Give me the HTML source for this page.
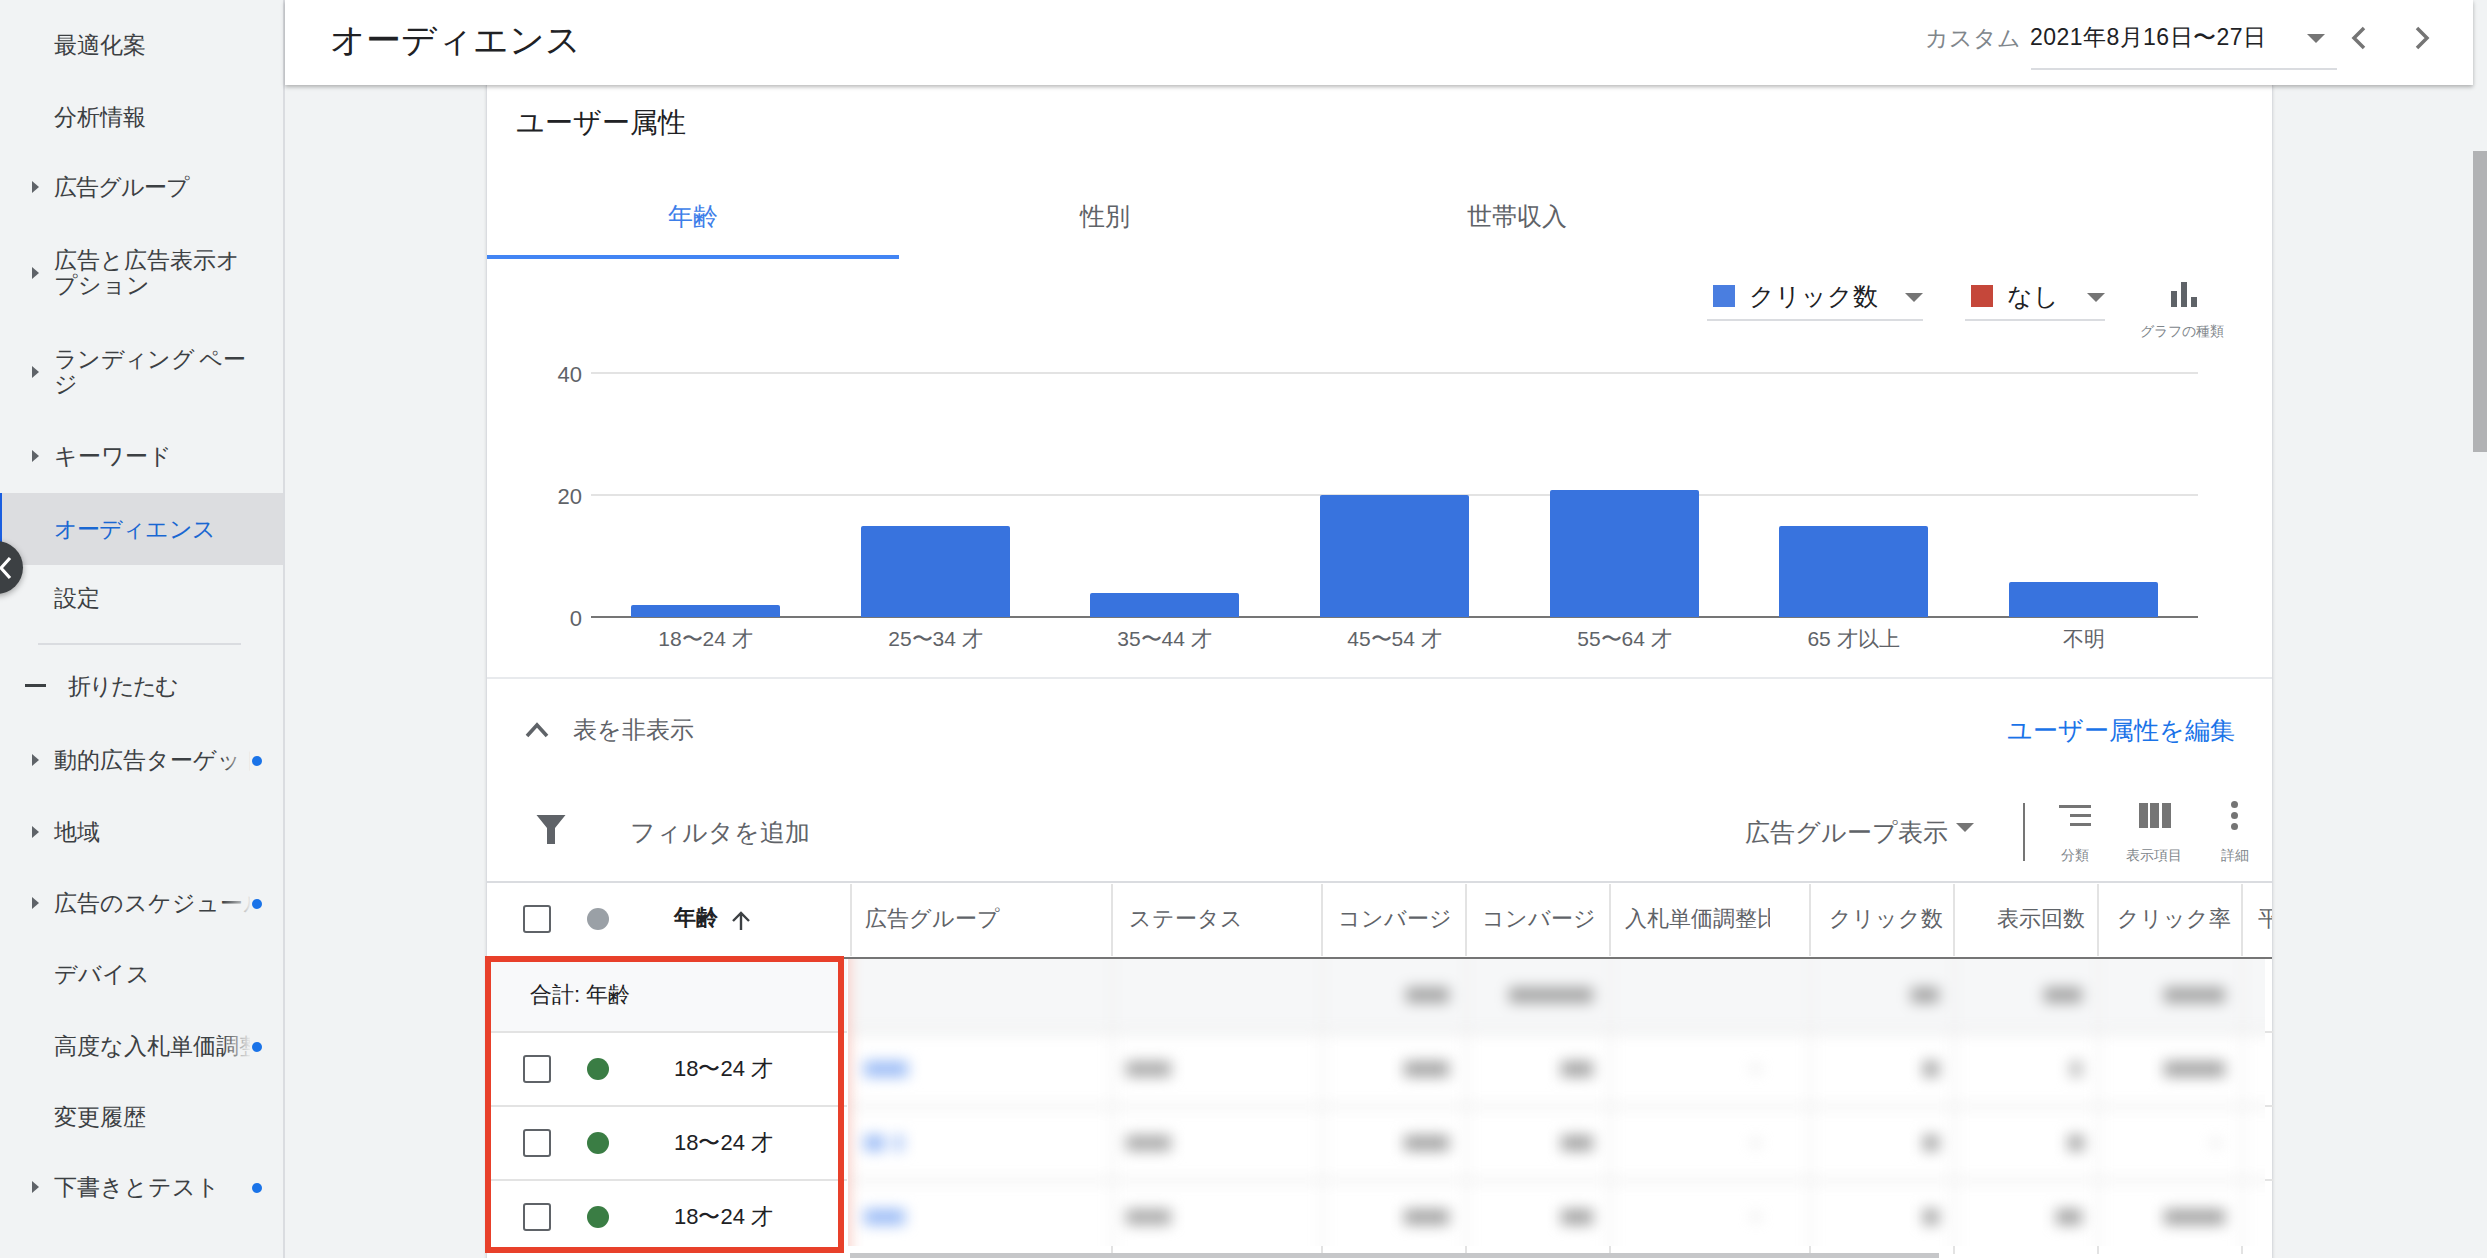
<!DOCTYPE html>
<html><head><meta charset="utf-8"><style>
*{margin:0;padding:0;box-sizing:border-box}
html,body{width:2487px;height:1258px;overflow:hidden;background:#f1f3f4;font-family:"Liberation Sans",sans-serif;color:#3c4043}
.a{position:absolute}
.t{position:absolute;white-space:nowrap}
#side{position:absolute;left:0;top:0;width:285px;height:1258px;background:#f1f3f4;border-right:2px solid #dadce0;overflow:hidden}
.nav{position:absolute;left:54px;font-size:23px;line-height:27px;color:#3c4043;white-space:nowrap}
.tri{position:absolute;left:32px;width:0;height:0;border-top:6px solid transparent;border-bottom:6px solid transparent;border-left:7px solid #5f6368}
.dot{position:absolute;left:252px;width:10px;height:10px;border-radius:50%;background:#1a73e8}
.fade{position:absolute;left:222px;width:30px;height:30px;background:linear-gradient(90deg,rgba(241,243,244,0),#f1f3f4)}
#hdr{position:absolute;left:285px;top:0;width:2188px;height:85px;background:#fff;box-shadow:0 2px 4px rgba(0,0,0,.28);z-index:5}
#card{position:absolute;left:486px;top:85px;width:1787px;height:1200px;background:#fff;border-left:1px solid #dadce0;border-right:1px solid #dadce0;box-shadow:0 0 3px rgba(0,0,0,.12)}
#vscroll{position:absolute;left:2473px;top:151px;width:14px;height:301px;background:#b1b2b4}
</style></head><body>
<div id="side"><div class="a" style="left:0;top:493px;width:284px;height:72px;background:#dcdde0"></div>
<div class="a" style="left:0;top:493px;width:2px;height:72px;background:#1a5ee0"></div>
<div class="nav" style="top:32px;line-height:27px;letter-spacing:0px;color:#3c4043;">最適化案</div>
<div class="nav" style="top:104px;line-height:27px;letter-spacing:0px;color:#3c4043;">分析情報</div>
<div class="nav" style="top:174px;line-height:27px;letter-spacing:-1px;color:#3c4043;">広告グループ</div>
<div class="tri" style="top:181px"></div>
<div class="nav" style="top:248px;line-height:25px;letter-spacing:0px;color:#3c4043;">広告と広告表示オ<br>プション</div>
<div class="tri" style="top:267px"></div>
<div class="nav" style="top:347px;line-height:25px;letter-spacing:-0.7px;color:#3c4043;">ランディング ペー<br>ジ</div>
<div class="tri" style="top:366px"></div>
<div class="nav" style="top:443px;line-height:27px;letter-spacing:0px;color:#3c4043;">キーワード</div>
<div class="tri" style="top:450px"></div>
<div class="nav" style="top:516px;line-height:27px;letter-spacing:-0.9px;color:#1967d2;">オーディエンス</div>
<div class="nav" style="top:585px;line-height:27px;letter-spacing:0px;color:#3c4043;">設定</div>
<div class="nav" style="top:747px;line-height:27px;letter-spacing:0px;color:#3c4043;width:196px;overflow:hidden;">動的広告ターゲット</div>
<div class="fade" style="top:747px"></div>
<div class="tri" style="top:754px"></div>
<div class="dot" style="top:756px"></div>
<div class="nav" style="top:819px;line-height:27px;letter-spacing:0px;color:#3c4043;">地域</div>
<div class="tri" style="top:826px"></div>
<div class="nav" style="top:890px;line-height:27px;letter-spacing:0px;color:#3c4043;width:196px;overflow:hidden;">広告のスケジュール</div>
<div class="fade" style="top:890px"></div>
<div class="tri" style="top:897px"></div>
<div class="dot" style="top:899px"></div>
<div class="nav" style="top:961px;line-height:27px;letter-spacing:0px;color:#3c4043;">デバイス</div>
<div class="nav" style="top:1033px;line-height:27px;letter-spacing:0px;color:#3c4043;width:196px;overflow:hidden;">高度な入札単価調整</div>
<div class="fade" style="top:1033px"></div>
<div class="dot" style="top:1042px"></div>
<div class="nav" style="top:1104px;line-height:27px;letter-spacing:0px;color:#3c4043;">変更履歴</div>
<div class="nav" style="top:1174px;line-height:27px;letter-spacing:0px;color:#3c4043;">下書きとテスト</div>
<div class="tri" style="top:1181px"></div>
<div class="dot" style="top:1183px"></div>
<div class="a" style="left:38px;top:643px;width:203px;height:2px;background:#dadce0"></div>
<div class="a" style="left:25px;top:684px;width:21px;height:3px;background:#3c4043"></div>
<div class="nav" style="left:68px;top:673px;letter-spacing:-2px">折りたたむ</div></div>
<div class="a" style="left:-30px;top:541px;width:53px;height:53px;border-radius:50%;background:#3c4043;box-shadow:0 2px 6px rgba(0,0,0,.35);z-index:6"></div>
<svg class="a" style="left:0;top:555px;z-index:7" width="14" height="26" viewBox="0 0 14 26"><path d="M10 3 L1 13 L10 23" stroke="#fff" stroke-width="3.2" fill="none"/></svg>
<div id="hdr"><div class="t" style="left:45px;top:17px;font-size:35px;line-height:45px;color:#202124">オーディエンス</div>
<div class="t" style="left:1640px;top:22px;font-size:23px;line-height:32px;color:#80868b">カスタム</div>
<div class="t" style="left:1745px;top:21px;font-size:23px;line-height:32px;letter-spacing:0.45px;color:#202124">2021年8月16日〜27日</div>
<div class="a" style="left:1746px;top:68px;width:306px;height:2px;background:#dadce0"></div>
<div class="a" style="left:2022px;top:34px;width:0;height:0;border-left:9px solid transparent;border-right:9px solid transparent;border-top:9px solid #757575"></div>
<svg class="a" style="left:2064px;top:25px" width="20" height="26" viewBox="0 0 20 26"><path d="M15 3 L5 13 L15 23" stroke="#757575" stroke-width="3.5" fill="none"/></svg>
<svg class="a" style="left:2128px;top:25px" width="20" height="26" viewBox="0 0 20 26"><path d="M4 3 L14 13 L4 23" stroke="#757575" stroke-width="3.5" fill="none"/></svg></div>
<div id="card"><div class="t" style="left:29px;top:20px;font-size:28px;line-height:36px;color:#202124">ユーザー属性</div>
<div class="t" style="left:181px;top:114px;font-size:25px;line-height:34px;color:#3d7ee9">年齢</div>
<div class="t" style="left:593px;top:114px;font-size:25px;line-height:34px;color:#5f6368">性別</div>
<div class="t" style="left:980px;top:114px;font-size:25px;line-height:34px;color:#5f6368">世帯収入</div>
<div class="a" style="left:0;top:170px;width:412px;height:4px;background:#4285f4"></div>
<div class="a" style="left:1226px;top:200px;width:22px;height:22px;background:#4a7ee0"></div>
<div class="t" style="left:1262px;top:194px;font-size:25px;line-height:34px;color:#202124">クリック数</div>
<div class="a" style="left:1418px;top:208px;width:0;height:0;border-left:9px solid transparent;border-right:9px solid transparent;border-top:9px solid #757575"></div>
<div class="a" style="left:1220px;top:234px;width:216px;height:2px;background:#dadce0"></div>
<div class="a" style="left:1484px;top:200px;width:22px;height:22px;background:#c5473a"></div>
<div class="t" style="left:1520px;top:194px;font-size:25px;line-height:34px;color:#202124">なし</div>
<div class="a" style="left:1600px;top:208px;width:0;height:0;border-left:9px solid transparent;border-right:9px solid transparent;border-top:9px solid #757575"></div>
<div class="a" style="left:1478px;top:234px;width:140px;height:2px;background:#dadce0"></div>
<div class="a" style="left:1684px;top:206px;width:6px;height:16px;background:#5f6368"></div>
<div class="a" style="left:1694px;top:197px;width:6px;height:25px;background:#5f6368"></div>
<div class="a" style="left:1704px;top:212px;width:6px;height:10px;background:#5f6368"></div>
<div class="t" style="left:1653px;top:236px;font-size:14px;line-height:20px;color:#80868b">グラフの種類</div>
<div class="a" style="left:104px;top:287px;width:1607px;height:2px;background:#e3e3e3"></div>
<div class="t" style="left:53px;top:277px;width:42px;text-align:right;font-size:22px;line-height:26px;color:#5f6368">40</div>
<div class="a" style="left:104px;top:409px;width:1607px;height:2px;background:#e3e3e3"></div>
<div class="t" style="left:53px;top:399px;width:42px;text-align:right;font-size:22px;line-height:26px;color:#5f6368">20</div>
<div class="a" style="left:104px;top:531px;width:1607px;height:2px;background:#757575"></div>
<div class="t" style="left:53px;top:521px;width:42px;text-align:right;font-size:22px;line-height:26px;color:#5f6368">0</div>
<div class="a" style="left:144px;top:520px;width:149px;height:12px;background:#3873de;border-radius:2px 2px 0 0"></div>
<div class="t" style="left:94px;top:539px;width:249px;text-align:center;font-size:21px;line-height:30px;color:#5f6368">18〜24 才</div>
<div class="a" style="left:374px;top:441px;width:149px;height:91px;background:#3873de;border-radius:2px 2px 0 0"></div>
<div class="t" style="left:324px;top:539px;width:249px;text-align:center;font-size:21px;line-height:30px;color:#5f6368">25〜34 才</div>
<div class="a" style="left:603px;top:508px;width:149px;height:24px;background:#3873de;border-radius:2px 2px 0 0"></div>
<div class="t" style="left:553px;top:539px;width:249px;text-align:center;font-size:21px;line-height:30px;color:#5f6368">35〜44 才</div>
<div class="a" style="left:833px;top:410px;width:149px;height:122px;background:#3873de;border-radius:2px 2px 0 0"></div>
<div class="t" style="left:783px;top:539px;width:249px;text-align:center;font-size:21px;line-height:30px;color:#5f6368">45〜54 才</div>
<div class="a" style="left:1063px;top:405px;width:149px;height:127px;background:#3873de;border-radius:2px 2px 0 0"></div>
<div class="t" style="left:1013px;top:539px;width:249px;text-align:center;font-size:21px;line-height:30px;color:#5f6368">55〜64 才</div>
<div class="a" style="left:1292px;top:441px;width:149px;height:91px;background:#3873de;border-radius:2px 2px 0 0"></div>
<div class="t" style="left:1242px;top:539px;width:249px;text-align:center;font-size:21px;line-height:30px;color:#5f6368">65 才以上</div>
<div class="a" style="left:1522px;top:497px;width:149px;height:35px;background:#3873de;border-radius:2px 2px 0 0"></div>
<div class="t" style="left:1472px;top:539px;width:249px;text-align:center;font-size:21px;line-height:30px;color:#5f6368">不明</div>
<div class="a" style="left:0;top:592px;width:1785px;height:2px;background:#e8eaed"></div>
<svg class="a" style="left:37px;top:633px" width="26" height="22" viewBox="0 0 26 22"><path d="M3 18 L13 7 L23 18" stroke="#5f6368" stroke-width="3.6" fill="none"/></svg>
<div class="t" style="left:86px;top:629px;font-size:24px;line-height:32px;color:#5f6368">表を非表示</div>
<div class="t" style="left:1520px;top:628px;font-size:25px;line-height:34px;color:#1a73e8">ユーザー属性を編集</div>
<svg class="a" style="left:49px;top:730px" width="30" height="30" viewBox="0 0 30 30"><path d="M0.5 0 H29.5 L19 13 V29 H11 V13 Z" fill="#5f6368" stroke-linejoin="round"/></svg>
<div class="t" style="left:143px;top:730px;font-size:25px;line-height:34px;color:#5f6368">フィルタを追加</div>
<div class="t" style="left:1258px;top:730px;font-size:25px;line-height:34px;color:#5f6368">広告グループ表示</div>
<div class="a" style="left:1469px;top:738px;width:0;height:0;border-left:9px solid transparent;border-right:9px solid transparent;border-top:9px solid #757575"></div>
<div class="a" style="left:1536px;top:718px;width:2px;height:58px;background:#757575"></div>
<div class="a" style="left:1572px;top:720px;width:32px;height:3px;background:#757575"></div>
<div class="a" style="left:1583px;top:729px;width:21px;height:3px;background:#757575"></div>
<div class="a" style="left:1583px;top:738px;width:21px;height:3px;background:#757575"></div>
<div class="a" style="left:1652px;top:718px;width:9px;height:25px;background:#757575"></div>
<div class="a" style="left:1663px;top:718px;width:9px;height:25px;background:#757575"></div>
<div class="a" style="left:1675px;top:718px;width:9px;height:25px;background:#757575"></div>
<div class="a" style="left:1744px;top:716px;width:7px;height:7px;border-radius:50%;background:#757575"></div>
<div class="a" style="left:1744px;top:727px;width:7px;height:7px;border-radius:50%;background:#757575"></div>
<div class="a" style="left:1744px;top:738px;width:7px;height:7px;border-radius:50%;background:#757575"></div>
<div class="t" style="left:1574px;top:760px;font-size:14px;line-height:20px;color:#80868b">分類</div>
<div class="t" style="left:1639px;top:760px;font-size:14px;line-height:20px;color:#80868b">表示項目</div>
<div class="t" style="left:1734px;top:760px;font-size:14px;line-height:20px;color:#80868b">詳細</div>
<div class="a" style="left:0;top:796px;width:1785px;height:2px;background:#dadce0"></div>
<div class="a" style="left:0;top:872px;width:1785px;height:2px;background:#757575"></div>
<div class="a" style="left:363px;top:799px;width:2px;height:72px;background:#e3e3e3"></div>
<div class="a" style="left:624px;top:799px;width:2px;height:72px;background:#e3e3e3"></div>
<div class="a" style="left:834px;top:799px;width:2px;height:72px;background:#e3e3e3"></div>
<div class="a" style="left:978px;top:799px;width:2px;height:72px;background:#e3e3e3"></div>
<div class="a" style="left:1122px;top:799px;width:2px;height:72px;background:#e3e3e3"></div>
<div class="a" style="left:1322px;top:799px;width:2px;height:72px;background:#e3e3e3"></div>
<div class="a" style="left:1466px;top:799px;width:2px;height:72px;background:#e3e3e3"></div>
<div class="a" style="left:1610px;top:799px;width:2px;height:72px;background:#e3e3e3"></div>
<div class="a" style="left:1754px;top:799px;width:2px;height:72px;background:#e3e3e3"></div>
<div class="a" style="left:36px;top:820px;width:28px;height:28px;border:2.5px solid #5f6368;border-radius:3px"></div>
<div class="a" style="left:100px;top:823px;width:22px;height:22px;border-radius:50%;background:#9aa0a6"></div>
<div class="t" style="left:187px;top:818px;font-size:22px;line-height:30px;font-weight:bold;color:#202124">年齢</div>
<svg class="a" style="left:244px;top:826px" width="20" height="20" viewBox="0 0 20 20"><path d="M10 19 V2 M2 10 L10 2 L18 10" stroke="#3c4043" stroke-width="2.4" fill="none"/></svg>
<div class="t" style="left:378px;top:819px;font-size:22px;line-height:30px;color:#5f6368">広告グループ</div>
<div class="t" style="left:642px;top:819px;font-size:22px;line-height:30px;color:#5f6368">ステータス</div>
<div class="t" style="left:851px;top:819px;width:114px;overflow:hidden;font-size:22px;line-height:30px;color:#5f6368">コンバージョン</div>
<div class="t" style="left:995px;top:819px;width:114px;overflow:hidden;font-size:22px;line-height:30px;color:#5f6368">コンバージョン</div>
<div class="t" style="left:1138px;top:819px;width:145px;overflow:hidden;font-size:22px;line-height:30px;color:#5f6368">入札単価調整比</div>
<div class="t" style="left:1342px;top:819px;font-size:22px;line-height:30px;color:#5f6368">クリック数</div>
<div class="t" style="left:1510px;top:819px;font-size:22px;line-height:30px;color:#5f6368">表示回数</div>
<div class="t" style="left:1630px;top:819px;font-size:22px;line-height:30px;color:#5f6368">クリック率</div>
<div class="t" style="left:1771px;top:819px;width:14px;overflow:hidden;font-size:22px;line-height:30px;color:#5f6368">平均</div>
<div class="a" style="left:0;top:874px;width:360px;height:72px;background:#f8f9fa"></div>
<div class="a" style="left:0;top:946px;width:360px;height:2px;background:#e3e3e3"></div>
<div class="a" style="left:1778px;top:946px;width:8px;height:2px;background:#e3e3e3"></div>
<div class="a" style="left:0;top:1020px;width:360px;height:2px;background:#e3e3e3"></div>
<div class="a" style="left:1778px;top:1020px;width:8px;height:2px;background:#e3e3e3"></div>
<div class="a" style="left:0;top:1094px;width:360px;height:2px;background:#e3e3e3"></div>
<div class="a" style="left:1778px;top:1094px;width:8px;height:2px;background:#e3e3e3"></div>
<div class="a" style="left:624px;top:1161px;width:2px;height:8px;background:#e3e3e3"></div>
<div class="a" style="left:834px;top:1161px;width:2px;height:8px;background:#e3e3e3"></div>
<div class="a" style="left:978px;top:1161px;width:2px;height:8px;background:#e3e3e3"></div>
<div class="a" style="left:1122px;top:1161px;width:2px;height:8px;background:#e3e3e3"></div>
<div class="a" style="left:1322px;top:1161px;width:2px;height:8px;background:#e3e3e3"></div>
<div class="a" style="left:1466px;top:1161px;width:2px;height:8px;background:#e3e3e3"></div>
<div class="a" style="left:1610px;top:1161px;width:2px;height:8px;background:#e3e3e3"></div>
<div class="a" style="left:1754px;top:1161px;width:2px;height:8px;background:#e3e3e3"></div>
<div class="t" style="left:43px;top:895px;font-size:22px;line-height:30px;color:#202124">合計: 年齢</div>
<div class="a" style="left:36px;top:970px;width:28px;height:28px;border:2.5px solid #5f6368;border-radius:3px"></div>
<div class="a" style="left:100px;top:973px;width:22px;height:22px;border-radius:50%;background:#3a7d44"></div>
<div class="t" style="left:187px;top:969px;font-size:22px;line-height:30px;color:#202124">18〜24 才</div>
<div class="a" style="left:36px;top:1044px;width:28px;height:28px;border:2.5px solid #5f6368;border-radius:3px"></div>
<div class="a" style="left:100px;top:1047px;width:22px;height:22px;border-radius:50%;background:#3a7d44"></div>
<div class="t" style="left:187px;top:1043px;font-size:22px;line-height:30px;color:#202124">18〜24 才</div>
<div class="a" style="left:36px;top:1118px;width:28px;height:28px;border:2.5px solid #5f6368;border-radius:3px"></div>
<div class="a" style="left:100px;top:1121px;width:22px;height:22px;border-radius:50%;background:#3a7d44"></div>
<div class="t" style="left:187px;top:1117px;font-size:22px;line-height:30px;color:#202124">18〜24 才</div>
<div class="a" style="left:361px;top:874px;width:1417px;height:287px;overflow:hidden;background:#fff"><div class="a" style="left:0;top:0;width:1417px;height:287px;filter:blur(7px)"><div class="a" style="left:-20px;top:-20px;width:1460px;height:92px;background:#f6f7f8"></div><div class="a" style="left:-20px;top:72px;width:1460px;height:3px;background:#e6e6e6"></div><div class="a" style="left:-20px;top:146px;width:1460px;height:3px;background:#e6e6e6"></div><div class="a" style="left:-20px;top:220px;width:1460px;height:3px;background:#e6e6e6"></div><div class="a" style="left:263px;top:-20px;width:3px;height:340px;background:#eeeeee"></div><div class="a" style="left:473px;top:-20px;width:3px;height:340px;background:#eeeeee"></div><div class="a" style="left:617px;top:-20px;width:3px;height:340px;background:#eeeeee"></div><div class="a" style="left:761px;top:-20px;width:3px;height:340px;background:#eeeeee"></div><div class="a" style="left:961px;top:-20px;width:3px;height:340px;background:#eeeeee"></div><div class="a" style="left:1105px;top:-20px;width:3px;height:340px;background:#eeeeee"></div><div class="a" style="left:1249px;top:-20px;width:3px;height:340px;background:#eeeeee"></div><div class="a" style="left:1393px;top:-20px;width:3px;height:340px;background:#eeeeee"></div><div class="a" style="left:-20px;top:-20px;width:22px;height:340px;background:#f8cbc3"></div><div class="a" style="left:558px;top:28px;width:43px;height:16px;background:#a6a6a6"></div><div class="a" style="left:661px;top:28px;width:84px;height:16px;background:#a6a6a6"></div><div class="a" style="left:1063px;top:28px;width:28px;height:16px;background:#a6a6a6"></div><div class="a" style="left:1196px;top:28px;width:38px;height:16px;background:#a6a6a6"></div><div class="a" style="left:1316px;top:28px;width:61px;height:16px;background:#a6a6a6"></div><div class="a" style="left:556px;top:102px;width:45px;height:16px;background:#a6a6a6"></div><div class="a" style="left:713px;top:102px;width:32px;height:16px;background:#a6a6a6"></div><div class="a" style="left:904px;top:108px;width:8px;height:4px;background:#cccccc"></div><div class="a" style="left:1075px;top:102px;width:16px;height:16px;background:#a6a6a6"></div><div class="a" style="left:278px;top:102px;width:45px;height:16px;background:#acacac"></div><div class="a" style="left:556px;top:176px;width:45px;height:16px;background:#a6a6a6"></div><div class="a" style="left:713px;top:176px;width:32px;height:16px;background:#a6a6a6"></div><div class="a" style="left:904px;top:182px;width:8px;height:4px;background:#cccccc"></div><div class="a" style="left:1075px;top:176px;width:16px;height:16px;background:#a6a6a6"></div><div class="a" style="left:278px;top:176px;width:45px;height:16px;background:#acacac"></div><div class="a" style="left:556px;top:250px;width:45px;height:16px;background:#a6a6a6"></div><div class="a" style="left:713px;top:250px;width:32px;height:16px;background:#a6a6a6"></div><div class="a" style="left:904px;top:256px;width:8px;height:4px;background:#cccccc"></div><div class="a" style="left:1075px;top:250px;width:16px;height:16px;background:#a6a6a6"></div><div class="a" style="left:278px;top:250px;width:45px;height:16px;background:#acacac"></div><div class="a" style="left:16px;top:102px;width:44px;height:16px;background:#9dbdf6"></div><div class="a" style="left:16px;top:176px;width:21px;height:16px;background:#9dbdf6"></div><div class="a" style="left:47px;top:176px;width:8px;height:16px;background:#9dbcf5"></div><div class="a" style="left:16px;top:250px;width:41px;height:16px;background:#9dbdf6"></div><div class="a" style="left:1222px;top:102px;width:12px;height:16px;background:#bbbbbb"></div><div class="a" style="left:1316px;top:102px;width:61px;height:16px;background:#a6a6a6"></div><div class="a" style="left:1220px;top:176px;width:16px;height:16px;background:#a6a6a6"></div><div class="a" style="left:1364px;top:182px;width:8px;height:4px;background:#cccccc"></div><div class="a" style="left:1208px;top:250px;width:26px;height:16px;background:#a6a6a6"></div><div class="a" style="left:1316px;top:250px;width:61px;height:16px;background:#a6a6a6"></div></div></div>
<div class="a" style="left:363px;top:1168px;width:1089px;height:6px;background:#c6c7c9"></div>
<div class="a" style="left:-2px;top:871px;width:359px;height:297px;border:6px solid #e8402a"></div></div>
<div id="vscroll"></div>
</body></html>
